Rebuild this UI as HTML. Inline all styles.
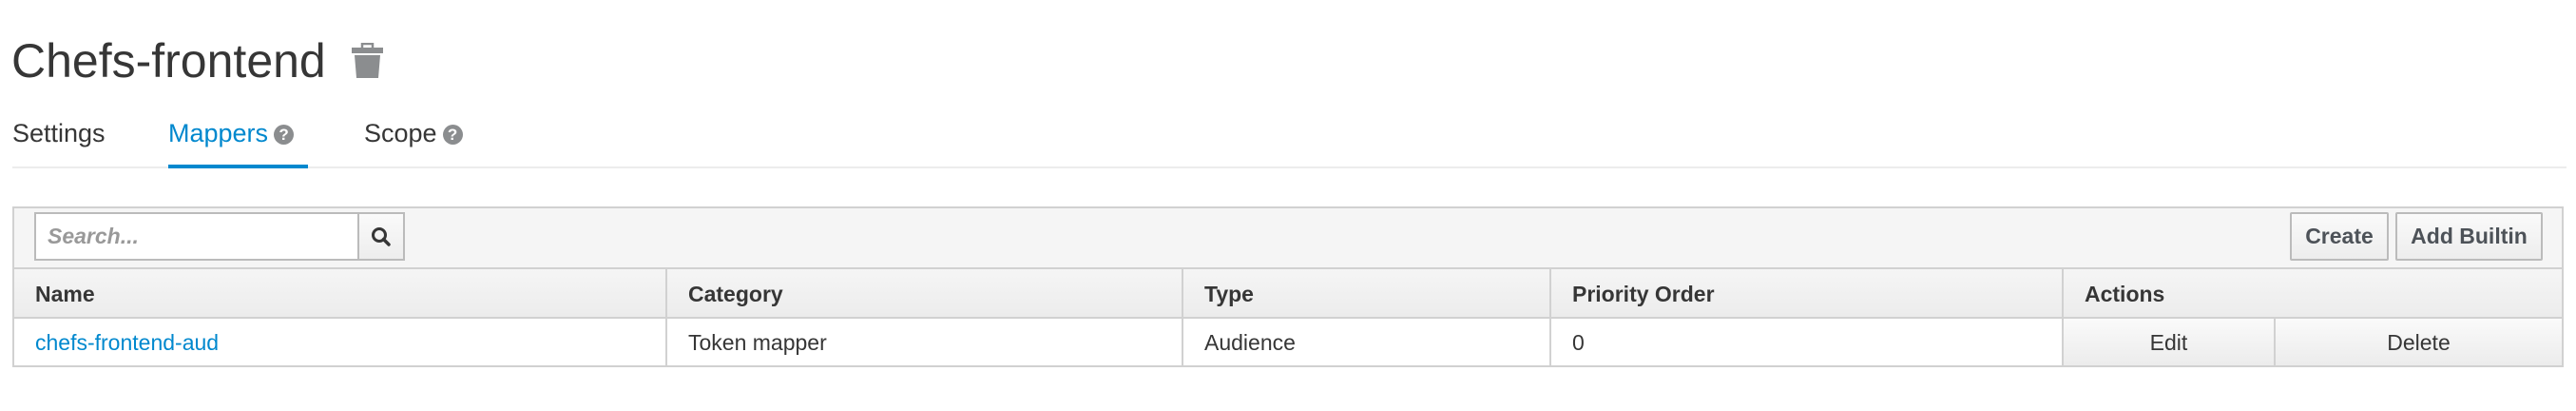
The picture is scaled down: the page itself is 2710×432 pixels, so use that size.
<!DOCTYPE html>
<html><head><meta charset="utf-8"><style>
body{margin:0;width:2710px;height:432px;background:#fff;font-family:"Liberation Sans",sans-serif;color:#363636;position:relative;overflow:hidden}
.a{position:absolute}
.title{left:12px;top:32px;font-size:50px;color:#363636;line-height:64px}
.tab{top:122px;font-size:27px;line-height:36px;color:#363636}
.q{display:inline-block;width:21px;height:21px;border-radius:50%;background:#8b8d8f;color:#fff;font-size:17px;font-weight:bold;text-align:center;line-height:21px;vertical-align:2px;margin-left:6px}
.cell{position:absolute;font-size:23px;line-height:52px;box-sizing:border-box;padding-left:22px}
.btn{position:absolute;border:2px solid #bbb;border-radius:2px;background:linear-gradient(#fafafa,#ededed);font-size:23px;font-weight:bold;color:#4d5258;text-align:center;line-height:47px;box-sizing:border-box}
</style></head><body>
<div class="a title">Chefs-frontend</div>
<svg class="a" style="left:370px;top:45px" width="33" height="38" viewBox="0 0 33 38"><rect x="0" y="5" width="33" height="6" fill="#8b8d8f"/><rect x="11" y="1" width="11" height="6" fill="none" stroke="#8b8d8f" stroke-width="2.5"/><path d="M3 13H30L28 37H5Z" fill="#8b8d8f"/></svg>
<div class="a tab" style="left:13px">Settings</div>
<div class="a tab" style="left:177px;color:#0088ce">Mappers<span class="q">?</span></div>
<div class="a tab" style="left:383px">Scope<span class="q">?</span></div>
<div class="a" style="left:13px;top:175px;width:2687px;height:2px;background:#ececec"></div>
<div class="a" style="left:177px;top:173px;width:147px;height:4px;background:#0088ce"></div>
<div class="a" style="left:13px;top:217px;width:2684px;height:169px;box-sizing:border-box;border:2px solid #d1d1d1;background:#f5f5f5"></div>
<div class="a" style="left:36px;top:223px;width:390px;height:51px;box-sizing:border-box;border:2px solid #bbb;background:#fff"></div>
<div class="a" style="left:50px;top:224px;font-size:23px;line-height:49px;font-style:italic;font-weight:bold;color:#999">Search...</div>
<div class="a" style="left:376px;top:223px;width:50px;height:51px;box-sizing:border-box;border:2px solid #bbb;background:linear-gradient(#fafafa,#ededed)"></div>
<svg class="a" style="left:390px;top:238px" width="22" height="22" viewBox="0 0 22 22"><circle cx="9" cy="9" r="6.5" fill="none" stroke="#363636" stroke-width="3"/><path d="M13.5 13.5L19 19" stroke="#363636" stroke-width="3.5" stroke-linecap="round"/></svg>
<div class="btn" style="left:2409px;top:223px;width:104px;height:51px">Create</div>
<div class="btn" style="left:2520px;top:223px;width:155px;height:51px">Add Builtin</div>
<div class="a" style="left:15px;top:281px;width:2680px;height:2px;background:#d1d1d1"></div>
<div class="a" style="left:15px;top:283px;width:2680px;height:50px;background:linear-gradient(#f5f5f5,#ececec)"></div>
<div class="a" style="left:15px;top:333px;width:2680px;height:2px;background:#d1d1d1"></div>
<div class="a" style="left:15px;top:335px;width:2680px;height:49px;background:#fff"></div>
<div class="a" style="left:2169px;top:335px;width:526px;height:49px;background:linear-gradient(#fafafa,#ececec)"></div>
<div class="a" style="left:700px;top:283px;width:2px;height:101px;background:#d1d1d1"></div>
<div class="a" style="left:1243px;top:283px;width:2px;height:101px;background:#d1d1d1"></div>
<div class="a" style="left:1630px;top:283px;width:2px;height:101px;background:#d1d1d1"></div>
<div class="a" style="left:2169px;top:283px;width:2px;height:101px;background:#d1d1d1"></div>
<div class="a" style="left:2392px;top:335px;width:2px;height:49px;background:#d1d1d1"></div>
<div class="cell" style="left:15px;top:283px;font-weight:bold">Name</div>
<div class="cell" style="left:702px;top:283px;font-weight:bold">Category</div>
<div class="cell" style="left:1245px;top:283px;font-weight:bold">Type</div>
<div class="cell" style="left:1632px;top:283px;font-weight:bold">Priority Order</div>
<div class="cell" style="left:2171px;top:283px;font-weight:bold">Actions</div>
<div class="cell" style="left:15px;top:334px;color:#0088ce">chefs-frontend-aud</div>
<div class="cell" style="left:702px;top:334px">Token mapper</div>
<div class="cell" style="left:1245px;top:334px">Audience</div>
<div class="cell" style="left:1632px;top:334px">0</div>
<div class="cell" style="left:2171px;top:334px;width:221px;padding:0;text-align:center">Edit</div>
<div class="cell" style="left:2394px;top:334px;width:301px;padding:0;text-align:center">Delete</div>
</body></html>
